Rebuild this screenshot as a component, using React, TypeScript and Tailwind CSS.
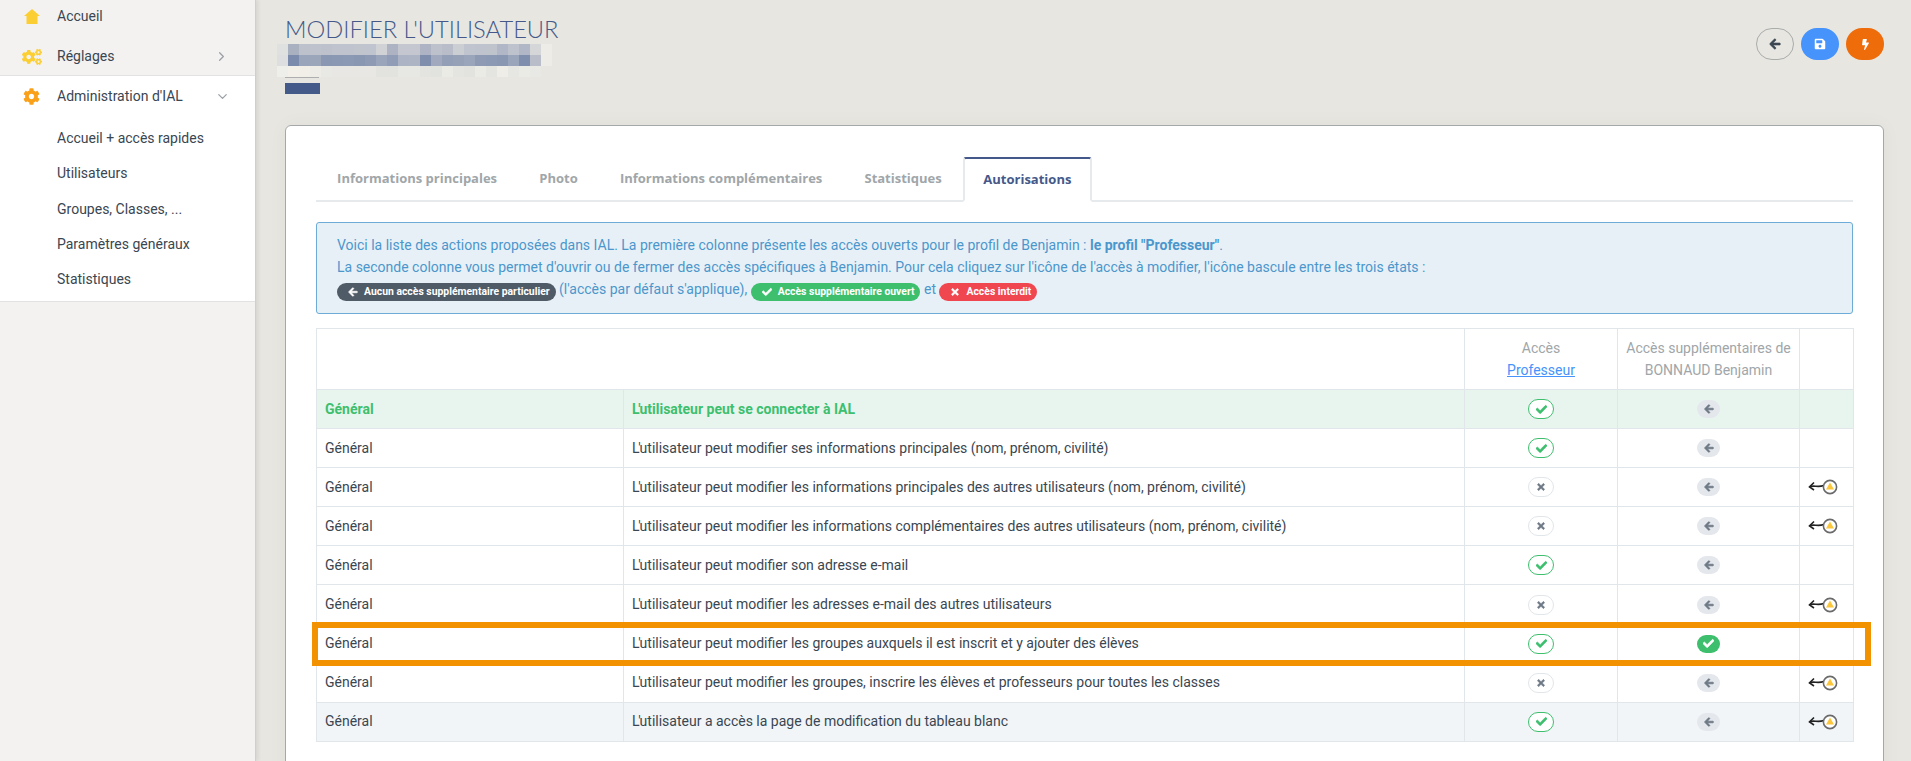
import React from 'react';
import { ChevronDown, ChevronRight } from 'lucide-react';
import { FaArrowLeft, FaBolt, FaCheck, FaCog, FaCogs, FaSave, FaTimes } from 'react-icons/fa';

const blurRows = [
  ['#dfe0e0', '#a9b0c0', '#bcc1cc', '#bdc2cc', '#bcc1cc', '#bec3cd', '#bec3cd', '#bfc4cd', '#c0c4ce', '#d0d2d6', '#adb3c3', '#c4c7d0', '#c4c7d0', '#aeb4c4', '#bcc1cc', '#b8bdc9', '#cbced3', '#c0c4ce', '#bfc3cd', '#bec3cc', '#b1b7c6', '#bdc2cc', '#b1b7c6', '#d4d6d8', '#eeece6'],
  ['#dcdedf', '#7b8bab', '#9aa4ba', '#9ca6bb', '#8997b2', '#8b98b3', '#8c99b4', '#8a97b2', '#8e9ab4', '#9aa5bb', '#919db7', '#acb3c4', '#adb4c4', '#7f8ead', '#a0a9bd', '#939fb7', '#96a1b8', '#9aa4ba', '#8e9ab4', '#8c99b4', '#8a97b2', '#9aa4ba', '#7f8ead', '#b8bdc9', '#eeece6'],
  ['#eeeeea', '#f3f0ea', '#f2efe9', '#eeece6', '#e8e8e4', '#e8e7e3', '#e9e7e3', '#e8e7e3', '#e8e7e3', '#e2e3df', '#e2e3df', '#e7e7e3', '#e7e7e3', '#e3e4e0', '#e1e3df', '#ebebe6', '#e4e5e1', '#e2e3df', '#ebebe6', '#e4e5e1', '#eeede7', '#e6e6e2', '#ebebe6', '#e8e8e4', '#e7e6e1'],
];

type Access = 'check' | 'cross';

// text without the leading L' (kerned tighter in the picture)
const rows: { text: string; access: Access; extra?: boolean; warn?: boolean; tone?: string }[] = [
  { text: 'utilisateur peut se connecter à IAL', access: 'check', tone: 'green' },
  { text: 'utilisateur peut modifier ses informations principales (nom, prénom, civilité)', access: 'check' },
  { text: 'utilisateur peut modifier les informations principales des autres utilisateurs (nom, prénom, civilité)', access: 'cross', warn: true },
  { text: 'utilisateur peut modifier les informations complémentaires des autres utilisateurs (nom, prénom, civilité)', access: 'cross', warn: true },
  { text: 'utilisateur peut modifier son adresse e-mail', access: 'check' },
  { text: 'utilisateur peut modifier les adresses e-mail des autres utilisateurs', access: 'cross', warn: true },
  { text: 'utilisateur peut modifier les groupes auxquels il est inscrit et y ajouter des élèves', access: 'check', extra: true },
  { text: 'utilisateur peut modifier les groupes, inscrire les élèves et professeurs pour toutes les classes', access: 'cross', warn: true },
  { text: 'utilisateur a accès la page de modification du tableau blanc', access: 'check', warn: true, tone: 'blue' },
];

const HomeIcon = () => (
  <svg width="16" height="15" viewBox="0 0 16 15" fill="#fbcf33">
    <path d="M8 0 16 7H13.5V15H2.5V7H0Z" />
  </svg>
);

const WarnArrow = () => (
  <svg width="31" height="18" viewBox="0 0 31 18" fill="none">
    <path d="M1.5 9C5 6.5 10 10 15.5 7.5" stroke="#222" strokeWidth="1.6" />
    <path d="M6 4.5 1.5 9l4.5 3" stroke="#222" strokeWidth="1.6" />
    <circle cx="22" cy="9" r="6.6" fill="#fff" stroke="#6a6a6a" strokeWidth="1.6" />
    <path d="M22 4.5 26 11.5H18Z" fill="#fcc63c" />
  </svg>
);

const Pill = ({ className, children }: { className: string; children: React.ReactNode }) => (
  <span className={`inline-flex h-[18px] items-center gap-[6px] rounded-full pl-[11px] pr-[6px] align-[-3px] text-[10.4px] font-bold text-white ${className}`}>
    {children}
  </span>
);

const Cell = ({ className = '', colSpan, children }: { className?: string; colSpan?: number; children?: React.ReactNode }) => (
  <td colSpan={colSpan} className={`border border-[#e1e6ea] px-2 align-middle ${className}`}>{children}</td>
);

export default function App() {
  return (
    <div className="relative flex h-[761px] w-[1911px] overflow-hidden bg-[#e7e6e1] font-['Roboto',sans-serif] text-[14px] text-[#3a4651]">
      {/* Sidebar */}
      <aside className="h-full w-[256px] shrink-0 border-r border-[#cfcfcb] bg-[#f3f2f0] shadow-[2px_0_4px_rgba(0,0,0,0.08)]">
        <div className="h-[76px] border-b border-[#e2e2e2]">
          <div className="flex h-[32px] items-center pl-[24px]">
            <div className="flex w-[33px]"><HomeIcon /></div>
            <span>Accueil</span>
          </div>
          <div className="flex h-[42px] items-center pl-[22px] pt-[7px]">
            <div className="flex w-[35px]"><FaCogs size={20} color="#fbcf33" /></div>
            <span>Réglages</span>
            <ChevronRight className="ml-auto mr-[26px] text-[#9aa0a6]" size={15} />
          </div>
        </div>
        <div className="h-[226px] border-b border-[#e2e2e2] bg-white">
          <div className="flex h-[40px] items-center pl-[23px]">
            <div className="flex w-[34px]"><FaCog size={17} color="#f9a11b" /></div>
            <span>Administration d'IAL</span>
            <ChevronDown className="ml-auto mr-[25px] text-[#9aa0a6]" size={15} />
          </div>
          <ul className="flex flex-col pl-[57px] pt-[5px]">
            {['Accueil + accès rapides', 'Utilisateurs', 'Groupes, Classes, ...', 'Paramètres généraux', 'Statistiques'].map((item) => (
              <li key={item} className="flex h-[35.3px] items-center">{item}</li>
            ))}
          </ul>
        </div>
      </aside>

      {/* Main */}
      <main className="min-w-0 flex-1 pl-[29px] pr-[27px]">
        <div className="flex h-[125px] items-start justify-between">
          <div>
            <h1 className="pt-[15px] font-['Lato',sans-serif] text-[23.7px] font-light leading-[29px] text-[#44598a]">MODIFIER L'UTILISATEUR</h1>
            <div className="-ml-[8px] flex flex-col">
              {blurRows.map((row, i) => (
                <div key={i} className="flex h-[11px]">
                  {row.map((c, j) => (
                    <div key={j} className="h-full w-[11px]" style={{ backgroundColor: c }} />
                  ))}
                </div>
              ))}
            </div>
            <div className="h-px w-[34px] bg-[#aeaeae]" />
            <div className="mt-[5px] h-[11px] w-[35px] bg-[#445b8a]" />
          </div>
          <div className="mt-[28px] flex gap-[7px]">
            <button className="flex h-[32px] w-[38px] items-center justify-center rounded-full border border-[#a9acab] text-[#3a4651]">
              <FaArrowLeft size={12} stroke="currentColor" strokeWidth={30} />
            </button>
            <button className="flex h-[32px] w-[38px] items-center justify-center rounded-full bg-[#4593fb] text-white">
              <FaSave size={12} />
            </button>
            <button className="flex h-[32px] w-[38px] items-center justify-center rounded-full bg-[#ef6c0b] text-white">
              <FaBolt size={11} />
            </button>
          </div>
        </div>

        <section className="h-[700px] rounded-t-[6px] border border-[#a5a8a8] bg-white pl-[30px] pr-[30px] pt-[31px] shadow-[0_0_20px_rgba(0,0,0,0.04)]">
          {/* Tabs */}
          <div className="flex h-[45px] border-b-2 border-[#e7eaec] font-['Open_Sans',sans-serif] text-[13px] font-bold text-[#a0a6a9]">
            {['Informations principales', 'Photo', 'Informations complémentaires', 'Statistiques'].map((t) => (
              <div key={t} className="flex items-center px-[21.1px]">{t}</div>
            ))}
            <div className="-mb-[2px] flex items-center rounded-t-[3px] border-x-2 border-b-2 border-t-2 border-x-[#e7eaec] border-b-white border-t-[#44598a] bg-white px-[18.5px] text-[#44598a]">Autorisations</div>
          </div>

          {/* Alert */}
          <div className="mt-[20px] h-[92px] rounded-[3px] border border-[#6dacd6] bg-[#e8f0f7] px-[20px] pt-[11px] leading-[22px] text-[#4b97cc]">
            <p>Voici la liste des actions proposées dans IAL. La première colonne présente les accès ouverts pour le profil de Benjamin : <b>le profil "Professeur"</b>.</p>
            <p>La seconde colonne vous permet d'ouvrir ou de fermer des accès spécifiques à Benjamin. Pour cela cliquez sur l'icône de l'accès à modifier, l'icône bascule entre les trois états :</p>
            <p>
              <Pill className="bg-[#4f5b66]"><FaArrowLeft size={10} stroke="currentColor" strokeWidth={30} />Aucun accès supplémentaire particulier</Pill>{' '}
              (l'accès par défaut s'applique),{' '}
              <Pill className="bg-[#3dbf6e]"><FaCheck size={10} stroke="currentColor" strokeWidth={30} />Accès supplémentaire ouvert</Pill>{' '}
              et{' '}
              <Pill className="bg-[#f0464f]"><FaTimes size={10} stroke="currentColor" strokeWidth={30} />Accès interdit</Pill>
            </p>
          </div>

          {/* Table */}
          <table className="mt-[14px] w-[1537px] table-fixed border-collapse">
            <colgroup>
              <col className="w-[307px]" />
              <col className="w-[841px]" />
              <col className="w-[153px]" />
              <col className="w-[182px]" />
              <col className="w-[54px]" />
            </colgroup>
            <thead>
              <tr className="h-[61px] text-center leading-[22px] text-[#a0a6a9]">
                <Cell colSpan={2} />
                <Cell className="text-center">
                  <div>Accès</div>
                  <a className="text-[#4593fb] underline">Professeur</a>
                </Cell>
                <Cell className="px-0 text-center">Accès supplémentaires de<br />BONNAUD Benjamin</Cell>
                <Cell />
              </tr>
            </thead>
            <tbody>
              {rows.map((r) => {
                const bg = r.tone === 'green' ? 'bg-[#e8f5ef] font-bold text-[#3dbf6e]' : r.tone === 'blue' ? 'bg-[#f1f5f8]' : '';
                return (
                  <tr key={r.text} className={`h-[39.1px] ${bg}`}>
                    <Cell>Général</Cell>
                    <Cell><span className="tracking-[-1.2px]">L'</span>{r.text}</Cell>
                    <Cell>
                      <div className={`mx-auto flex h-[20px] w-[26px] items-center justify-center rounded-full border bg-white ${r.access === 'check' ? 'border-[#3dbf6e] text-[#3dbf6e]' : 'border-[#e1e6ea] text-[#6d7885]'}`}>
                        {r.access === 'check' ? <FaCheck size={11} stroke="currentColor" strokeWidth={30} /> : <FaTimes size={10} stroke="currentColor" strokeWidth={30} />}
                      </div>
                    </Cell>
                    <Cell>
                      {r.extra ? (
                        <div className="mx-auto flex h-[18px] w-[23px] items-center justify-center rounded-full bg-[#3dbf6e] text-white"><FaCheck size={11} stroke="currentColor" strokeWidth={30} /></div>
                      ) : (
                        <div className="mx-auto flex h-[18px] w-[23px] items-center justify-center rounded-full bg-[#e4e8ec] text-[#6d7885]"><FaArrowLeft size={10} stroke="currentColor" strokeWidth={40} /></div>
                      )}
                    </Cell>
                    <Cell className="px-0">
                      {r.warn && <div className="flex justify-center pr-[6px]"><WarnArrow /></div>}
                    </Cell>
                  </tr>
                );
              })}
            </tbody>
          </table>
        </section>
      </main>

      {/* Highlight annotation over the row */}
      <div className="pointer-events-none absolute left-[312px] top-[622px] h-[44px] w-[1559px] border-[6px] border-[#f39200]" />
    </div>
  );
}
